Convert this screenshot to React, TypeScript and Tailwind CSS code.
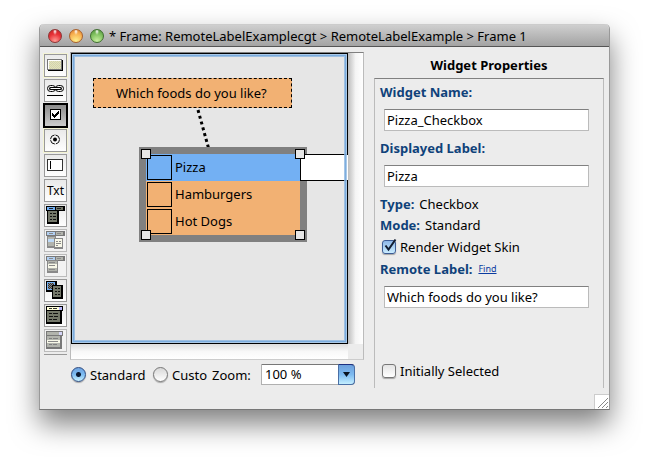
import type { ReactNode } from "react";

const OLIVE = "#74786a";

function Icon({ children, faded }: { children: ReactNode; faded?: boolean }) {
  return (
    <svg
      viewBox="0 0 23 23"
      className={faded ? "block size-[23px] opacity-50" : "block size-[23px]"}
      shapeRendering="crispEdges"
      fill="none"
      aria-hidden="true"
    >
      {children}
    </svg>
  );
}

function MenuBarShape() {
  return (
    <>
      <rect x="2" y="2" width="19" height="5" fill="#000" />
      <rect x="3" y="3" width="8" height="3" fill="#73b0f3" />
      <rect x="12" y="3" width="7" height="3" fill={OLIVE} />
      <path d="M5 4.500h4M13 4.500h4" stroke="#222" />
    </>
  );
}

function ListWindowShape() {
  return (
    <>
      <rect x="2" y="2" width="17" height="5" fill="#000" />
      <rect x="3" y="3" width="12" height="3" fill="#ffffd8" />
      <rect x="15" y="3" width="3" height="3" fill="#b9b9ff" />
      <path d="M5 4.500h3M9 4.500h4" stroke="#333" />
      <rect x="2" y="7" width="16" height="13" fill="#000" />
      <rect x="3" y="7" width="13" height="11" fill={OLIVE} />
      <path d="M5 9.500h3M9 9.500h5M5 12.500h4M10 12.500h4M5 15.500h3M9 15.500h4" stroke="#111" />
    </>
  );
}

const tools: { name: string; icon: ReactNode; look?: "glow" | "faded" | "on" }[] = [
  {
    name: "Button",
    look: "glow",
    icon: (
      <Icon>
        <defs>
          <pattern id="weave" width="2" height="2" patternUnits="userSpaceOnUse">
            <rect width="2" height="2" fill="#e6e6b4" />
            <rect width="1" height="1" fill="#cfcfb4" />
            <rect x="1" y="1" width="1" height="1" fill="#cfcfb4" />
          </pattern>
        </defs>
        <rect x="4" y="6" width="15" height="11" rx="1" fill="#000" />
        <rect x="3" y="5" width="15" height="11" rx="1" fill="#777" />
        <rect x="4" y="6" width="13" height="9" fill="#fff" />
        <rect x="5" y="7" width="12" height="8" fill="url(#weave)" />
      </Icon>
    ),
  },
  {
    name: "Link",
    icon: (
      <Icon>
        <g shapeRendering="geometricPrecision" stroke="#000">
          <rect x="3.500" y="6.500" width="8" height="6" rx="3" />
          <rect x="11.500" y="6.500" width="8" height="6" rx="3" />
          <path d="M6.500 9.500h10" strokeWidth="3" strokeLinecap="round" />
          <path d="M6.500 9.500h10" stroke="#fff" />
        </g>
        <path d="M3 16.500h16" stroke="#000" />
      </Icon>
    ),
  },
  {
    name: "Check box",
    look: "on",
    icon: (
      <Icon>
        <rect x="6.500" y="5.500" width="10" height="10" fill="#fff" stroke="#000" />
        <path d="M8 9v3h1v1h1v1h1v-1h1v-1h1v-1h1v-1h1V7h-1v1h-1v1h-1v1h-1v1h-1v-1H9V9z" fill="#000" />
      </Icon>
    ),
  },
  {
    name: "Radio button",
    look: "glow",
    icon: (
      <Icon>
        <g shapeRendering="geometricPrecision">
          <circle cx="11" cy="10.500" r="4.500" stroke="#111" strokeDasharray="6 1.070" />
          <circle cx="11" cy="10.500" r="2" fill="#000" />
        </g>
      </Icon>
    ),
  },
  {
    name: "Text box",
    icon: (
      <Icon>
        <rect x="3" y="5" width="16" height="12" fill="#333" />
        <rect x="4" y="6" width="14" height="10" fill="#fff" />
        <path d="M6.500 7v8" stroke="#000" />
      </Icon>
    ),
  },
  { name: "Text", icon: <span className="block text-center text-[12px] leading-[20px]">Txt</span> },
  {
    name: "Pull-down menu",
    icon: (
      <Icon>
        <MenuBarShape />
        <rect x="3" y="6" width="12" height="14" fill="#000" />
        <rect x="4" y="7" width="9" height="11" fill={OLIVE} />
        <path d="M6 9.500h2M9 9.500h3M6 12.500h2M9 12.500h3M6 15.500h2M9 15.500h3" stroke="#111" />
      </Icon>
    ),
  },
  {
    name: "Submenu",
    look: "faded",
    icon: (
      <Icon faded>
        <MenuBarShape />
        <rect x="3" y="7" width="9" height="12" fill="#222" />
        <rect x="4" y="8" width="7" height="9" fill={OLIVE} />
        <rect x="4" y="10" width="6" height="3" fill="#8cc4ff" />
        <rect x="10" y="9" width="9" height="11" fill="#222" />
        <rect x="11" y="10" width="7" height="8" fill="#ffffe0" />
        <path d="M12 12.500h2M15 12.500h2M12 14.500h5M12 16.500h2" stroke="#222" />
      </Icon>
    ),
  },
  {
    name: "Menu item",
    look: "faded",
    icon: (
      <Icon faded>
        <MenuBarShape />
        <rect x="3" y="6" width="11" height="13" fill="#222" />
        <rect x="4" y="7" width="9" height="10" fill={OLIVE} />
        <rect x="4" y="10" width="9" height="4" fill="#ffffe0" />
        <path d="M5 8.500h6M5 11.500h6M5 15.500h6" stroke="#222" />
      </Icon>
    ),
  },
  {
    name: "Context menu",
    icon: (
      <Icon>
        <defs>
          <pattern id="dots" width="2" height="2" patternUnits="userSpaceOnUse">
            <rect width="2" height="2" fill="#8a8a8a" />
            <rect width="1" height="1" fill="#333" />
            <rect x="1" y="1" width="1" height="1" fill="#333" />
          </pattern>
        </defs>
        <rect x="2" y="2" width="11" height="11" fill="#000" />
        <rect x="3" y="3" width="8" height="8" fill="#73b0f3" />
        <rect x="4" y="4" width="6" height="6" fill="url(#dots)" />
        <rect x="8" y="6" width="11" height="14" fill="#000" />
        <rect x="9" y="7" width="8" height="11" fill={OLIVE} />
        <path d="M11 9.500h2M14 9.500h2M11 12.500h2M14 12.500h2M11 15.500h2M14 15.500h2" stroke="#111" />
      </Icon>
    ),
  },
  {
    name: "List box",
    icon: (
      <Icon>
        <ListWindowShape />
      </Icon>
    ),
  },
  {
    name: "List item",
    look: "faded",
    icon: (
      <Icon faded>
        <ListWindowShape />
        <rect x="3" y="3" width="12" height="3" fill={OLIVE} />
        <rect x="3" y="11" width="13" height="3" fill="#ffffe0" />
        <path d="M4 12.500h10" stroke="#222" />
      </Icon>
    ),
  },
];

function Toolbar() {
  return (
    <div role="toolbar" aria-label="Widgets" className="mt-[7px] flex w-[23px] shrink-0 flex-col gap-[2px]">
      {tools.map(({ name, icon, look }) => (
        <button
          key={name}
          type="button"
          aria-label={name}
          aria-pressed={look === "on"}
          className={
            "relative size-[23px] " +
            (look === "on"
              ? "bg-linear-to-b from-[#8a8a8a] to-[#d0d0d0] outline-2 -outline-offset-1 outline-black"
              : look === "glow"
                ? "bg-linear-to-b from-[#e9e9e9] to-white inset-ring inset-ring-[#999] outline-1 outline-[#f4f4d4]"
                : look === "faded"
                  ? "bg-[#f2f2f2] inset-ring inset-ring-[#bbb]"
                  : "bg-linear-to-b from-[#e9e9e9] to-white inset-ring inset-ring-[#999]")
          }
        >
          {icon}
        </button>
      ))}
      <div className="h-px bg-[#999]" />
    </div>
  );
}

function Handle({ place }: { place: string }) {
  return <span className={"absolute size-[10px] border border-black bg-[#e6e6e6] " + place} />;
}

function FrameCanvas() {
  const foods = ["Pizza", "Hamburgers", "Hot Dogs"];
  return (
    <div className="grid grid-cols-[1fr_15px] grid-rows-[291px_15px] border border-t-[#808080] border-x-[#bbb] border-b-[#ccc]">
      <div className="relative overflow-hidden bg-[#e6e6e6] inset-ring inset-ring-black">
        <div className="absolute left-[22px] top-[25px] flex h-[30px] w-[199px] items-center border border-dashed border-black bg-[#f2b173] pl-[22px] whitespace-nowrap">
          Which foods do you like?
        </div>
        <svg className="absolute left-[117px] top-[55px] h-[40px] w-[30px]" aria-hidden="true">
          <path d="M10 2 L20.500 40" stroke="#000" strokeWidth="3" strokeDasharray="3 3" />
        </svg>
        <div className="absolute left-[68px] top-[94px] w-[168px] border-[7px] border-[#808080]">
          {foods.map((food) => (
            <label
              key={food}
              className={
                "flex h-[27px] items-center gap-[3px] pl-px " +
                (food === "Pizza" ? "bg-[#73b0f3]" : "bg-[#f2b173]")
              }
            >
              <input type="checkbox" className="size-[25px] appearance-none border border-black" />
              <span className="pb-[2px]">{food}</span>
            </label>
          ))}
        </div>
        <div className="absolute left-[229px] top-[101px] right-0 h-[27px] border border-r-0 border-black bg-white" />
        <Handle place="left-[70px] top-[96px]" />
        <Handle place="left-[224px] top-[96px]" />
        <Handle place="left-[70px] top-[177px]" />
        <Handle place="left-[224px] top-[177px]" />
        <div className="pointer-events-none absolute inset-px border border-[#a3c4e6]/90">
          <div className="size-full border border-[#6fa5dc]/90">
            <div className="size-full border border-[#8fb7e0]/80" />
          </div>
        </div>
      </div>
      <div className="bg-linear-to-r from-[#bdbdbd] via-[#f4f4f4] to-white" />
      <div className="bg-linear-to-b from-[#dcdcdc] via-[#f8f8f8] to-white" />
      <div className="mr-px bg-[#ececec]" />
    </div>
  );
}

const radioLook =
  "size-[15px] shrink-0 appearance-none rounded-full border border-[#777] bg-linear-to-b from-[#d8d8d8] to-white shadow-[0_1px_1px_rgba(0,0,0,0.3)] checked:border-[#2c4a80] checked:bg-[radial-gradient(circle_at_50%_50%,#0b1a33_0,#0b1a33_2px,transparent_3px),linear-gradient(#6fa3e0,#7cbcf2_50%,#c9f2ff)]";

function ViewControls() {
  return (
    <div className="mt-[4px] flex h-[21px] items-center whitespace-nowrap">
      <label className="flex w-[83px] items-center gap-[4px] pl-px">
        <input type="radio" name="view" defaultChecked className={radioLook} />
        Standard
      </label>
      <label className="flex w-[59px] items-center gap-[4px]">
        <input type="radio" name="view" className={radioLook} />
        Custo
      </label>
      <label htmlFor="zoom" className="w-[49px]">
        Zoom:
      </label>
      <div className="relative h-[21px] w-[94px]">
        <select
          id="zoom"
          className="block size-full appearance-none rounded-r-[4px] border border-[#b0b0b0] border-t-[#777] bg-white pl-[3px] leading-[19px]"
        >
          <option>100 %</option>
        </select>
        <span className="pointer-events-none absolute inset-y-0 right-0 flex w-[17px] justify-center rounded-r-[4px] border border-[#4a6fa5] border-t-[#1c2f80] bg-linear-to-b from-[#6c9fdc] via-[#7dbaf0] to-[#c4efff] pt-[7px]">
          <svg viewBox="0 0 7 5" className="h-[5px] w-[7px]" aria-hidden="true">
            <path d="M0 0h7L3.500 5z" fill="#0a1420" />
          </svg>
        </span>
      </div>
    </div>
  );
}

const labelLook = "font-bold text-[#0f427a]";

function TextField({ id, label, value, extra }: { id: string; label: string; value: string; extra?: ReactNode }) {
  return (
    <div className="mb-[6px]">
      <div className="flex h-[21px] items-center gap-[6px]">
        <label htmlFor={id} className={labelLook}>
          {label}
        </label>
        {extra}
      </div>
      <input
        id={id}
        defaultValue={value}
        className="mt-[7px] ml-[4px] block h-[22px] w-[205px] border border-[#bbb] border-t-[#808080] bg-white px-[2px]"
      />
    </div>
  );
}

function CheckField({ label, checked }: { label: string; checked?: boolean }) {
  return (
    <label className="flex h-[23px] items-center gap-[4px] pl-[2px]">
      <span className="relative size-[14px]">
        <input
          type="checkbox"
          defaultChecked={checked}
          className="block size-[14px] appearance-none rounded-[3px] border border-[#777] bg-linear-to-b from-[#e4e4e4] to-white shadow-[0_1px_1px_rgba(0,0,0,0.3)] checked:border-[#3d5c94] checked:from-[#8fb8e8] checked:to-[#c9ecff]"
        />
        {checked && (
          <svg viewBox="0 0 16 16" className="pointer-events-none absolute -top-[2px] left-0 size-[16px]" aria-hidden="true">
            <path d="M3.500 7.500 L6.500 11.500 L13.500 1.500" fill="none" stroke="#111c30" strokeWidth="2" />
          </svg>
        )}
      </span>
      {label}
    </label>
  );
}

function Properties() {
  return (
    <aside className="mt-[5px] mb-[21px] ml-[10px] flex w-[230px] shrink-0 flex-col">
      <h2 className="h-[26px] text-center font-bold leading-[26px]">Widget Properties</h2>
      <div className="flex-1 border border-b-0 border-x-[#bbb] border-t-[#808080] px-[5px] pt-[2px] pb-[6px]">
        <TextField id="widget-name" label="Widget Name:" value="Pizza_Checkbox" />
        <TextField id="displayed-label" label="Displayed Label:" value="Pizza" />
        <dl>
          <div className="flex h-[21px] items-center gap-[5px]">
            <dt className={labelLook}>Type:</dt>
            <dd>Checkbox</dd>
          </div>
          <div className="flex h-[21px] items-center gap-[5px]">
            <dt className={labelLook}>Mode:</dt>
            <dd>Standard</dd>
          </div>
        </dl>
        <CheckField label="Render Widget Skin" checked />
        <TextField
          id="remote-label"
          label="Remote Label:"
          value="Which foods do you like?"
          extra={
            <a href="#find" className="text-[9px] leading-[12px] text-[#0a3ba0] underline">
              Find
            </a>
          }
        />
        <div className="mt-[51px]">
          <CheckField label="Initially Selected" />
        </div>
      </div>
    </aside>
  );
}

export default function App() {
  return (
    <div className="min-h-screen bg-white px-[39px] pt-[24px] pb-[54px] font-['Noto_Sans',sans-serif] text-[13px] leading-[18px] text-black">
      <div className="relative overflow-visible rounded-t-[5px] border border-t-0 border-[#999] border-b-[#777] bg-[#ececec] shadow-[0_14px_28px_rgba(0,0,0,0.5)]">
        <header className="flex h-[23px] items-center gap-[7px] overflow-hidden rounded-t-[5px] border-t border-b border-t-[#ccc] border-b-[#555] bg-linear-to-b from-[#cfcfcf] to-[#a3a3a3] pl-[8px] whitespace-nowrap">
          <button
            type="button"
            aria-label="Close"
            className="size-[14px] rounded-full border border-[#8d3434] bg-[radial-gradient(ellipse_at_50%_12%,#fff_0,transparent_24%),radial-gradient(circle_at_50%_90%,#ff9b94,#e83238_55%,#c02024)]"
          />
          <button
            type="button"
            aria-label="Minimize"
            className="size-[14px] rounded-full border border-[#a8602c] bg-[radial-gradient(ellipse_at_50%_12%,#fff_0,transparent_24%),radial-gradient(circle_at_50%_90%,#fff08c,#f8b050_60%,#d87828)]"
          />
          <button
            type="button"
            aria-label="Enlarge"
            className="size-[14px] rounded-full border border-[#3f6e30] bg-[radial-gradient(ellipse_at_50%_12%,#fff_0,transparent_24%),radial-gradient(circle_at_50%_90%,#c8f0a0,#7cbe5c_60%,#4c8c38)]"
          />
          <h1 className="-ml-[2px]">* Frame: RemoteLabelExamplecgt &gt; RemoteLabelExample &gt; Frame 1</h1>
        </header>
        <main className="flex pr-[5px] pl-[4px]">
          <Toolbar />
          <section className="mt-[5px] ml-[3px] min-w-0 flex-1">
            <FrameCanvas />
            <ViewControls />
          </section>
          <Properties />
        </main>
        <svg className="absolute right-0 bottom-0 size-[15px] border-t border-l border-[#ccc] bg-white" viewBox="0 0 14 14" aria-hidden="true">
          <path d="M3 13L13 3M7 13L13 7M11 13L13 11" stroke="#888" />
        </svg>
      </div>
    </div>
  );
}
